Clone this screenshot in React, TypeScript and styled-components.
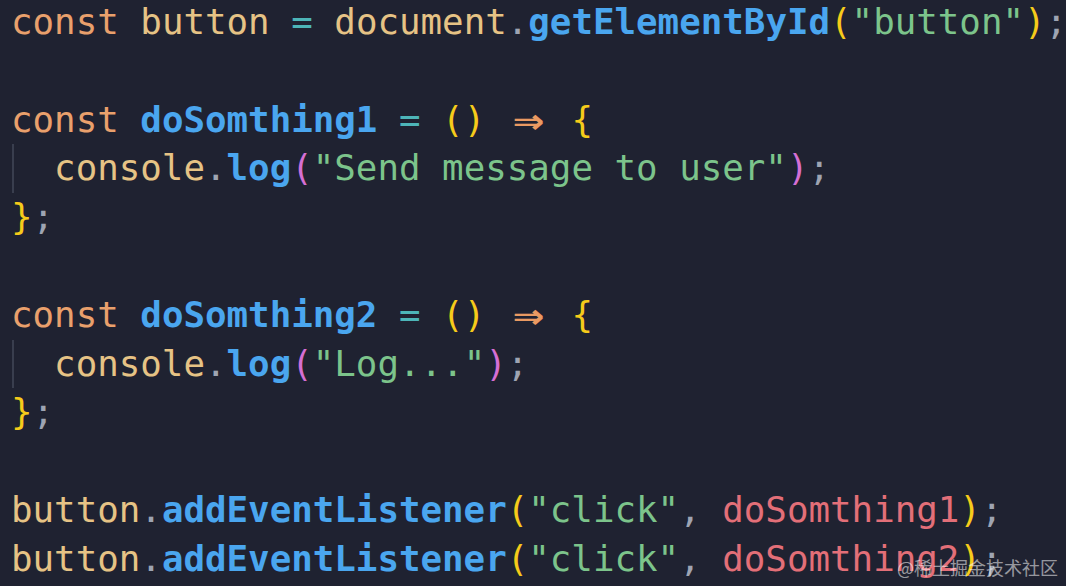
import * as React from 'react';
import styled, { createGlobalStyle } from 'styled-components';

type Kind = 'kw' | 'var' | 'op' | 'fn' | 'br1' | 'br2' | 'str' | 'punc' | 'arg' | 'arrow' | 'plain';

type Tok = [Kind, string];

const lines: { indent?: boolean; toks: Tok[] }[] = [
  {
    toks: [
      ['kw', 'const'], ['plain', ' '], ['var', 'button'], ['plain', ' '], ['op', '='], ['plain', ' '],
      ['var', 'document'], ['punc', '.'], ['fn', 'getElementById'], ['br1', '('], ['str', '"button"'],
      ['br1', ')'], ['punc', ';'],
    ],
  },
  { toks: [] },
  {
    toks: [
      ['kw', 'const'], ['plain', ' '], ['fn', 'doSomthing1'], ['plain', ' '], ['op', '='], ['plain', ' '],
      ['br1', '()'], ['plain', ' '], ['arrow', '⇒'], ['plain', ' '], ['br1', '{'],
    ],
  },
  {
    indent: true,
    toks: [
      ['plain', '  '], ['var', 'console'], ['punc', '.'], ['fn', 'log'], ['br2', '('],
      ['str', '"Send message to user"'], ['br2', ')'], ['punc', ';'],
    ],
  },
  { toks: [['br1', '}'], ['punc', ';']] },
  { toks: [] },
  {
    toks: [
      ['kw', 'const'], ['plain', ' '], ['fn', 'doSomthing2'], ['plain', ' '], ['op', '='], ['plain', ' '],
      ['br1', '()'], ['plain', ' '], ['arrow', '⇒'], ['plain', ' '], ['br1', '{'],
    ],
  },
  {
    indent: true,
    toks: [
      ['plain', '  '], ['var', 'console'], ['punc', '.'], ['fn', 'log'], ['br2', '('],
      ['str', '"Log..."'], ['br2', ')'], ['punc', ';'],
    ],
  },
  { toks: [['br1', '}'], ['punc', ';']] },
  { toks: [] },
  {
    toks: [
      ['var', 'button'], ['punc', '.'], ['fn', 'addEventListener'], ['br1', '('], ['str', '"click"'],
      ['punc', ','], ['plain', ' '], ['arg', 'doSomthing1'], ['br1', ')'], ['punc', ';'],
    ],
  },
  {
    toks: [
      ['var', 'button'], ['punc', '.'], ['fn', 'addEventListener'], ['br1', '('], ['str', '"click"'],
      ['punc', ','], ['plain', ' '], ['arg', 'doSomthing2'], ['br1', ')'], ['punc', ';'],
    ],
  },
];

const colors: Record<Kind, string> = {
  kw: '#e9a06c',
  var: '#e6c385',
  op: '#4db5b8',
  fn: '#4aa6ef',
  br1: '#f6cb1a',
  br2: '#d56fd3',
  str: '#7cc48b',
  punc: '#9ea4b2',
  arg: '#e36f78',
  arrow: '#ea9a62',
  plain: '#c8ccd4',
};

const App = () => (
  <Screen>
    <GlobalStyle />
    <Code>
      {lines.map((line, i) => (
        <Line key={i} $indent={line.indent}>
          {line.toks.length === 0
            ? '\u00a0'
            : line.toks.map(([kind, text], j) =>
                kind === 'arrow' ? (
                  <Arrow key={j}>{text}</Arrow>
                ) : (
                  <Token key={j} $kind={kind}>
                    {text}
                  </Token>
                )
              )}
        </Line>
      ))}
    </Code>
    <Watermark>@稀土掘金技术社区</Watermark>
  </Screen>
);

const GlobalStyle = createGlobalStyle`
  html, body {
    margin: 0;
    padding: 0;
    background: #1f2231;
  }
`;

const Screen = styled.div`
  position: relative;
  width: 1066px;
  height: 586px;
  overflow: hidden;
  background: #1f2231;
`;

const Code = styled.div`
  margin-top: -2px;
  padding-left: 11px;
  font-family: 'DejaVu Sans Mono', 'Liberation Mono', monospace;
  font-size: 35.8px;
  line-height: 48.8px;
  white-space: pre;
`;

const Line = styled.div<{ $indent?: boolean }>`
  position: relative;
  height: 48.8px;

  &::before {
    content: '';
    display: ${(p) => (p.$indent ? 'block' : 'none')};
    position: absolute;
    left: 1px;
    top: 0;
    bottom: 0;
    width: 2px;
    background: #393e4e;
  }
`;

const Token = styled.span<{ $kind: Kind }>`
  color: ${(p) => colors[p.$kind]};
  font-weight: ${(p) => (p.$kind === 'fn' ? 700 : 400)};
`;

const Arrow = styled.span`
  display: inline-block;
  width: 2ch;
  text-align: center;
  color: ${colors.arrow};
  font-weight: 700;
  transform: scale(1.45, 1.2);
`;

const Watermark = styled.div`
  position: absolute;
  right: 8px;
  bottom: 6px;
  font-family: 'Noto Sans CJK SC', 'Noto Sans', sans-serif;
  font-size: 18px;
  color: rgba(255, 255, 255, 0.55);
`;

export default App;
